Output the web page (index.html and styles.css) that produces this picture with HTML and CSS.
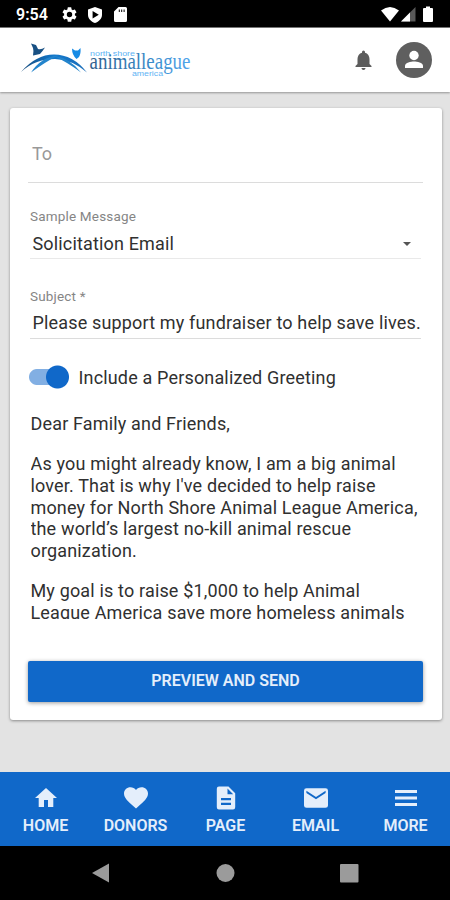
FILE: index.html
```html
<!DOCTYPE html>
<html lang="en">
<head>
<meta charset="utf-8">
<title>Email</title>
<link rel="stylesheet" href="styles.css">
</head>
<body>
<div class="status">
  <span class="time">9:54</span>
  <svg class="st-icon gear" viewBox="2 2 20 20"><path d="M19.14 12.94c.04-.3.06-.61.06-.94s-.02-.64-.07-.94l2.03-1.58a.49.49 0 0 0 .12-.61l-1.92-3.32a.49.49 0 0 0-.59-.22l-2.39.96a7 7 0 0 0-1.62-.94l-.36-2.54a.48.48 0 0 0-.48-.41h-3.84a.48.48 0 0 0-.47.41l-.36 2.54c-.59.24-1.13.57-1.62.94l-2.39-.96a.48.48 0 0 0-.59.22L2.74 8.87a.48.48 0 0 0 .12.61l2.03 1.58a6 6 0 0 0 0 1.88l-2.03 1.58a.49.49 0 0 0-.12.61l1.92 3.32c.12.22.37.29.59.22l2.39-.96c.5.38 1.03.7 1.62.94l.36 2.54c.05.24.24.41.48.41h3.84c.24 0 .44-.17.47-.41l.36-2.54a7 7 0 0 0 1.62-.94l2.39.96c.22.08.47 0 .59-.22l1.92-3.32a.48.48 0 0 0-.12-.61zM12 15.6a3.6 3.6 0 1 1 0-7.2 3.6 3.6 0 0 1 0 7.2z"/></svg>
  <svg class="st-icon shield" viewBox="0 0 14 16"><path fill-rule="evenodd" d="M7 0l7 2.6v5.2c0 3.8-3 7-7 8.2-4-1.200-7-4.400-7-8.200V2.600zM4.600 4v7.600L10.800 7.800z"/></svg>
  <svg class="st-icon sd" viewBox="0 0 13 15"><path fill-rule="evenodd" d="M4.500 0H11.500Q13 0 13 1.500V13.500Q13 15 11.500 15H1.500Q0 15 0 13.500V4.500zM4.800 2.500v2.500h1v-2.500zM7.200 2.500v2.500h1v-2.500zM9.600 2.500v2.500h1v-2.500z"/></svg>
  <svg class="st-right" viewBox="0 0 54 17"><path d="M0 4.500Q9-2.500 18 4.500L9 15.500z"/><path d="M20 15.500L34.500 1v14.500z" opacity=".35"/><path d="M20 15.500L29 6.500v9z"/><path d="M42 3q0-1 1-1h2V.5h4V2h2q1 0 1 1v12q0 1-1 1h-8q-1 0-1-1z"/></svg>
</div>
<header class="header">
  <svg class="logo" viewBox="0 0 174 40">
    <defs>
      <linearGradient id="arc"><stop offset="0" stop-color="#174b7c"/><stop offset=".5" stop-color="#1278cc"/><stop offset="1" stop-color="#1b6db8"/></linearGradient>
      <linearGradient id="word"><stop offset="0" stop-color="#315f8d"/><stop offset=".5" stop-color="#3684c0"/><stop offset="1" stop-color="#50a5ec"/></linearGradient>
    </defs>
    <path fill="url(#arc)" d="M0 32Q15 14.500 33 14.500Q52 14.500 66 32.500Q51 19.500 34 19Q14 19 0 32z"/>
    <path fill="#2384cc" d="M10 32.500Q20 17 37 15.500Q25 21.500 10 32.500zM32 15.500Q49 18 60 32.500Q46 22 32 15.500z"/>
    <path fill="#195083" d="M10 3.500L15 5L17 9Q20 10 24 7.500Q21 12 19 14L12 15.500Q13 11 12 8z"/>
    <path fill="#168be5" d="M51 8.500L54 10.500H57L59.500 8Q60 14 58 17L55.500 19Q51 15 51 8.500z"/>
    <text class="word" x="68.500" y="29" textLength="101" lengthAdjust="spacingAndGlyphs" fill="url(#word)">animalleague</text>
    <text class="tiny" x="69" y="15.500" textLength="45" lengthAdjust="spacingAndGlyphs">north shore</text>
    <text class="tiny" x="111" y="35.500" textLength="31" lengthAdjust="spacingAndGlyphs">america</text>
  </svg>
  <svg class="bell" viewBox="4 2 16 20"><path d="M12 22c1.100 0 2-.9 2-2h-4c0 1.100.9 2 2 2zm6-6v-5c0-3.070-1.640-5.640-4.500-6.320V4a1.500 1.500 0 0 0-3 0v.680C7.630 5.360 6 7.920 6 11v5l-2 2v1h16v-1z"/></svg>
  <svg class="avatar" viewBox="0 0 36 36"><circle cx="18" cy="18" r="18" fill="#5f5f5f"/><circle cx="18" cy="13.500" r="4.700" fill="#fff"/><path fill="#fff" d="M9 26v-2.300c0-3 6-4.200 9-4.200s9 1.200 9 4.200v2.300z"/></svg>
</header>
<main class="content">
  <section class="card">
    <div class="to"><span>To</span></div>
    <div class="field">
      <div class="label">Sample Message</div>
      <div class="value"><span class="solicit">Solicitation Email</span><i class="caret"></i></div>
    </div>
    <div class="field subject">
      <div class="label">Subject *</div>
      <div class="value"><span class="subj">Please support my fundraiser to help save lives.</span></div>
    </div>
    <div class="toggle-row"><span class="switch"></span><span class="greet">Include a Personalized Greeting</span></div>
    <div class="message">
      <p>Dear Family and Friends,</p>
      <p>As you might already know, I am a big animal<br>lover. That is why I've decided to help raise<br>money for North Shore Animal League America,<br>the world’s largest no-kill animal rescue<br>organization.</p>
      <p>My goal is to raise $1,000 to help Animal<br>League America save more homeless animals</p>
    </div>
    <button class="send">PREVIEW AND SEND</button>
  </section>
</main>
<nav class="tabs">
  <div class="tab"><svg viewBox="0 0 24 24"><path d="M10 21v-7h4v7h5.300v-9H23L12 2 1 12h3.700v9z"/></svg><span>HOME</span></div>
  <div class="tab"><svg viewBox="0 0 24 24"><path d="M12 22.500l-1.700-1.500C4.200 15.500 0 12 0 7.500 0 4 2.900 1.300 6.500 1.300c2.100 0 4.200 1 5.500 2.600 1.300-1.600 3.400-2.600 5.500-2.600C21.100 1.300 24 4 24 7.500c0 4.500-4.200 8-10.300 13.500z"/></svg><span>DONORS</span></div>
  <div class="tab"><svg viewBox="0 0 24 24"><path d="M14.500.5H5Q2.800.5 2.800 2.700v18.600Q2.800 23.500 5 23.500h14q2.200 0 2.200-2.200V7.200zM17 19H7v-2.300h10zm0-4.700H7V12h10zM13.500 8.200V2.500l5.700 5.700z"/></svg><span>PAGE</span></div>
  <div class="tab"><svg viewBox="0 0 24 24"><path d="M2.500 2.300h19Q24 2.300 24 4.700v14.800q0 2.300-2.500 2.300h-19Q0 21.800 0 19.500V4.700q0-2.400 2.500-2.400zM21.600 7V4.700L12 11 2.400 4.700V7L12 13.300z"/></svg><span>EMAIL</span></div>
  <div class="tab"><svg viewBox="0 0 24 24"><path d="M1 4.100h22v2.900H1zm0 6.500h22v2.900H1zm0 6.500h22V20H1z"/></svg><span>MORE</span></div>
</nav>
<footer class="system">
  <svg viewBox="0 0 450 54"><path d="M92 27L109 17.500v19z"/><circle cx="225.500" cy="27" r="9"/><rect x="340" y="18" width="18.500" height="18.500" rx="1"/></svg>
</footer>
</body>
</html>
```
FILE: styles.css
```css
* { box-sizing: border-box; }
body {
  margin: 0;
  width: 450px;
  height: 900px;
  overflow: hidden;
  display: flex;
  flex-direction: column;
  font-family: Roboto, "Liberation Sans", sans-serif;
  background: #e3e3e3;
  color: #303030;
}
svg { display: block; flex: none; }
.status {
  height: 28px;
  flex: none;
  background: #000;
  border-bottom: 1px solid #777;
  display: flex;
  align-items: center;
  padding: 2px 15px 0 16px;
}
.status svg { fill: #fff; }
.time { color: #fff; font-size: 16px; font-weight: 600; width: 46px; }
.gear { width: 15px; height: 15px; }
.shield { width: 14px; height: 16px; margin-left: 11px; }
.sd { width: 13px; height: 15px; margin-left: 12px; }
.st-right { width: 54px; height: 17px; margin-left: auto; }
.header {
  height: 64px;
  flex: none;
  background: #fff;
  box-shadow: 0 1px 2px rgba(0,0,0,.35);
  display: flex;
  align-items: center;
  padding: 0 18px 0 21px;
}
.logo { width: 174px; height: 40px; margin-top: -1px; overflow: visible; }
.word { font: 23px "Liberation Serif", serif; }
.tiny { font: 8px "Liberation Sans", sans-serif; fill: #60b3f4; }
.bell { width: 17px; height: 20px; margin-left: auto; fill: #5c5c5c; }
.avatar { width: 36px; height: 36px; margin-left: 24px; }
.content { flex: 1; padding: 16px 8px 0 10px; }
.card {
  height: 612px;
  background: #fff;
  border-radius: 3px;
  box-shadow: 0 1px 3px rgba(0,0,0,.4);
  padding: 0 19px 0 18px;
  display: flex;
  flex-direction: column;
}
.to {
  height: 75px;
  border-bottom: 1px solid #dcdcdc;
  padding: 35px 0 0 4px;
  font-size: 18px;
  line-height: 22px;
  color: #999;
}
.field {
  height: 76px;
  margin: 0 2px;
  padding-top: 24px;
  border-bottom: 1px solid #e9e9e9;
}
.field.subject { height: 80px; padding-top: 28px; border-color: #dcdcdc; }
.label { font-size: 13.500px; line-height: 18px; color: #858585; letter-spacing: .180px; }
.value {
  height: 28px;
  padding: 7px 10px 0 2.500px;
  font-size: 18px;
  line-height: 24px;
  letter-spacing: .160px;
  display: flex;
  justify-content: space-between;
  white-space: nowrap;
}
.subject .value { padding: 6px 0 0 2.500px; }
.caret {
  width: 0;
  border: 4.500px solid transparent;
  border-top-color: #555;
  border-bottom: 0;
  height: 4px;
  margin-top: 10px;
}
.toggle-row {
  height: 24px;
  margin: 26px 0 0 1px;
  display: flex;
  align-items: center;
  font-size: 18px;
  letter-spacing: .160px;
}
.switch {
  width: 40px;
  height: 24px;
  margin-right: 9.500px;
  background:
    radial-gradient(circle at 28.500px 12px, #1068c9 11px, transparent 12px),
    linear-gradient(#82afe3, #82afe3) 8px 4px / 20px 16px no-repeat,
    radial-gradient(circle at 8px 12px, #82afe3 7.500px, transparent 8.500px);
}
.message {
  margin: 24px 0 0 2.500px;
  height: 206px;
  overflow: hidden;
  white-space: nowrap;
  font-size: 18px;
  letter-spacing: .160px;
  line-height: 21.750px;
}
.message p { margin: 0 0 18.400px; }
.send {
  width: 395px;
  height: 41px;
  margin-top: 42px;
  padding: 0 0 2px;
  border: 0;
  border-radius: 2px;
  background: #1068c9;
  color: #e4eefb;
  font: 600 16px Roboto, sans-serif;
  box-shadow: 0 1px 4px rgba(0,0,0,.4);
}
.tabs {
  height: 74px;
  flex: none;
  background: #1068c9;
  color: #e4eefb;
  display: grid;
  grid-template-columns: repeat(5, 1fr);
}
.tab {
  display: flex;
  flex-direction: column;
  align-items: center;
  padding: 14px 0 0 1px;
  font-size: 16px;
  font-weight: 600;
  line-height: 20px;
}
.tab svg { width: 24px; height: 24px; margin-bottom: 6px; fill: #e4eefb; }
.system { height: 54px; flex: none; background: #000; }
.system svg { width: 450px; height: 54px; fill: #9b9b9b; }
```
